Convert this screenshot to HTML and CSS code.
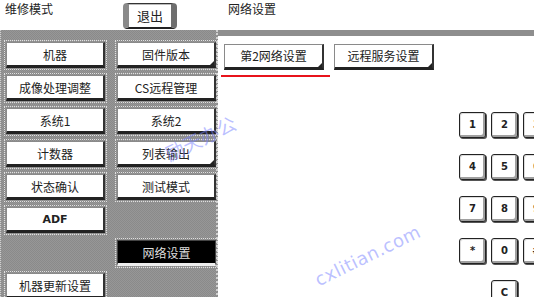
FILE: index.html
```html
<!DOCTYPE html>
<html lang="zh-CN">
<head>
  <meta charset="UTF-8">
  <title>维修模式 - 网络设置</title>
  <link rel="stylesheet" href="styles.css">
</head>
<body>
  <div class="screen">
    <!-- Header -->
    <div class="header">
      <div class="title">维修模式</div>
      <button class="exit-btn">退出</button>
      <div class="subtitle">网络设置</div>
    </div>

    <div class="main">
      <!-- Left menu -->
      <div class="side">
        <div class="menu-grid">
          <button class="btn">机器</button>
          <button class="btn more">固件版本</button>
          <button class="btn">成像处理调整</button>
          <button class="btn">CS远程管理</button>
          <button class="btn">系统1</button>
          <button class="btn">系统2</button>
          <button class="btn">计数器</button>
          <button class="btn more">列表输出</button>
          <button class="btn">状态确认</button>
          <button class="btn">测试模式</button>
          <button class="btn bold">ADF</button>
          <div></div>
          <div></div>
          <button class="btn active">网络设置</button>
          <button class="btn">机器更新设置</button>
        </div>
      </div>

      <!-- Right content -->
      <div class="content">
        <div class="tabs">
          <div class="tab-wrap selected">
            <button class="btn tab more">第2网络设置</button>
          </div>
          <div class="tab-wrap">
            <button class="btn tab more">远程服务设置</button>
          </div>
        </div>

        <div class="keypad">
          <button class="key">1</button>
          <button class="key">2</button>
          <button class="key">3</button>
          <button class="key">4</button>
          <button class="key">5</button>
          <button class="key">6</button>
          <button class="key">7</button>
          <button class="key">8</button>
          <button class="key">9</button>
          <button class="key">*</button>
          <button class="key">0</button>
          <button class="key">#</button>
          <div></div>
          <button class="key">C</button>
        </div>
      </div>
    </div>

    <!-- Watermarks -->
    <div class="mark mark-cn">励天办公</div>
    <div class="mark mark-en">cxlitian.com</div>
  </div>
</body>
</html>
```

FILE: styles.css
```css
/* General */
body {
  margin: 0;
  background: #fff;
  font-family: "Noto Sans CJK SC", "DejaVu Sans", sans-serif;
  color: #222;
}

.screen {
  position: relative;
  width: 534px;
  height: 297px;
  overflow: hidden;
}

button {
  font-family: inherit;
  color: #222;
  padding: 0;
  cursor: pointer;
}

/* Header */
.header {
  height: 30px;
  display: flex;
  align-items: flex-start;
  font-size: 12px;
}

.title {
  width: 118px;
  padding: 1px 0 0 5px;
  line-height: 16px;
}

.exit-btn {
  margin-top: 3px;
  width: 54px;
  height: 26px;
  background: #fff;
  font-size: 13px;
  border: 1px solid #333;
  border-left: 6px solid #8a8a8a;
  border-right: 6px solid #6e6e6e;
  border-bottom: 2px solid #222;
  border-radius: 4px;
  box-shadow: inset 0 1px 0 #bbb;
}

.subtitle {
  margin-left: 51px;
  padding-top: 1px;
  line-height: 16px;
}

/* Main */
.main {
  display: flex;
  height: 267px;
  border-top: 6px solid #8e8e8e;
}

.side {
  width: 218px;
  margin-top: -6px;
  padding-top: 12px;
  background: repeating-conic-gradient(#8a8a8a 0 25%, #979797 0 50%) 0 0 / 2px 2px;
  border-left: 1px dotted #d0d0d0;
  border-right: 2px dotted #d0d0d0;
}

.menu-grid {
  display: grid;
  grid-template-columns: 99px 99px;
  grid-auto-rows: 26px;
  column-gap: 12px;
  row-gap: 7px;
  padding-left: 5px;
}

/* Buttons */
.btn {
  position: relative;
  box-sizing: border-box;
  height: 26px;
  background: #fff;
  font-size: 12px;
  border: 1px solid #8a8a8a;
  border-right: 2px solid #333;
  border-bottom: 3px solid #222;
  outline: 1px dotted #e0e0e0;
  outline-offset: 1px;
}

.btn.bold {
  font-weight: bold;
  font-family: "DejaVu Sans", sans-serif;
  font-size: 11px;
}

.btn.more::after {
  content: "";
  position: absolute;
  right: 0;
  bottom: 0;
  border-left: 4px solid transparent;
  border-bottom: 4px solid #222;
}

.btn.active {
  background: #000;
  color: #ddd;
  border: 1px solid #444;
  border-bottom: 3px solid #eee;
}

/* Right content */
.content {
  flex: 1;
  padding-left: 6px;
}

.tabs {
  display: flex;
  gap: 4px;
  margin-top: 6px;
}

.tab-wrap {
  padding-bottom: 5px;
  border-bottom: 2px solid transparent;
}

.tab-wrap.selected {
  margin-left: -3px;
  padding-left: 3px;
  padding-right: 6px;
  border-bottom-color: #e8131b;
}

.tab {
  width: 100px;
  font-size: 12px;
  outline: none;
}

/* Keypad */
.keypad {
  display: grid;
  grid-template-columns: repeat(3, 27px);
  grid-auto-rows: 26px;
  column-gap: 5px;
  row-gap: 16px;
  margin: 35px 0 0 235px;
}

.key {
  box-sizing: border-box;
  background: #fff;
  border: 1px solid #222;
  border-radius: 3px;
  box-shadow: inset -2px -2px 0 #a0a0a0, inset 1px 1px 0 #ddd, 1px 1px 0 #555;
  font-family: "DejaVu Sans", sans-serif;
  font-weight: bold;
  font-size: 10px;
}

/* Watermarks */
.mark {
  position: absolute;
  color: rgba(120, 130, 255, 0.5);
  transform: rotate(-26deg);
  white-space: nowrap;
  pointer-events: none;
}

.mark-cn {
  left: 162px;
  top: 124px;
  font-size: 19px;
}

.mark-en {
  left: 310px;
  top: 245px;
  font-family: "DejaVu Sans", sans-serif;
  font-size: 18px;
  letter-spacing: 0.5px;
}
```
